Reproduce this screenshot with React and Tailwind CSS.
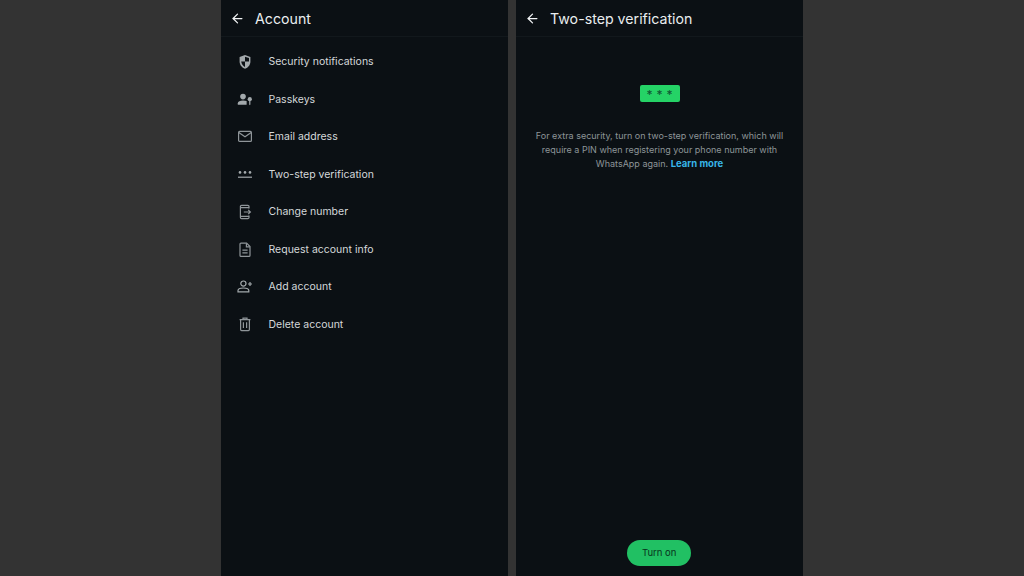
import React from 'react';
import { ArrowLeft } from 'lucide-react';

const Shield = () => (
  <svg width="16" height="16" viewBox="0 0 16 16" fill="none">
    <path d="M8 1 13.4 3V7.4C13.4 10.6 11.2 13.6 8 14.8 4.8 13.6 2.6 10.6 2.6 7.4V3Z" fill="#a3a9ac" />
    <path d="M8 2.7 12 4.1V7.6H8ZM8 7.6V13.1C6 12.1 4.5 10 4.2 7.6H8Z" fill="#0b1014" />
  </svg>
);

const Passkey = () => (
  <svg width="16" height="16" viewBox="0 0 16 16" fill="#a3a9ac">
    <circle cx="6" cy="4.6" r="2.8" />
    <path d="M.8 12.8V11.2C.8 9.4 3.2 8.4 6 8.4 7.4 8.4 8.7 8.6 9.6 9.1V12.8Z" />
    <circle cx="12.8" cy="7.2" r="2.1" />
    <path d="M12.2 8.6h1.2v3.8l-.6.9-.6-.9Z" />
  </svg>
);

const Mail = () => (
  <svg width="16" height="16" viewBox="0 0 16 16" fill="none" stroke="#8f9599" strokeWidth="1.2">
    <rect x="1.6" y="2.4" width="12.8" height="10" rx="1" />
    <path d="M1.8 3.4 8 7.8 14.2 3.4" />
  </svg>
);

const Pin = () => (
  <svg width="16" height="16" viewBox="0 0 16 16" fill="#a3a9ac">
    <circle cx="3" cy="5.4" r="1.3" />
    <circle cx="8" cy="5.4" r="1.3" />
    <circle cx="13" cy="5.4" r="1.3" />
    <rect x="1" y="9.6" width="14" height="1.2" />
  </svg>
);

const ChangeNumber = () => (
  <svg width="16" height="16" viewBox="0 0 16 16" fill="none" stroke="#8f9599" strokeWidth="1.2">
    <path d="M12 4.5V2.6C12 1.9 11.5 1.4 10.8 1.4H4.6C3.9 1.4 3.4 1.9 3.4 2.6V13.4C3.4 14.1 3.9 14.6 4.6 14.6H10.8C11.5 14.6 12 14.1 12 13.4V11.5" />
    <path d="M3.4 3.6H12M3.4 12.4H12" />
    <path d="M6.8 8H13.4M11.2 5.9 13.4 8 11.2 10.1" />
  </svg>
);

const Doc = () => (
  <svg width="16" height="16" viewBox="0 0 16 16" fill="none" stroke="#8f9599" strokeWidth="1.2">
    <path d="M3 2.2C3 1.6 3.4 1.2 4 1.2H9.6L13 4.6V13.4C13 14 12.6 14.4 12 14.4H4C3.4 14.4 3 14 3 13.4Z" />
    <path d="M9.4 1.4V4.8H12.8M5.4 8.2H10.6M5.4 10.8H10.6" />
  </svg>
);

const AddUser = () => (
  <svg width="16" height="16" viewBox="0 0 16 16" fill="none" stroke="#a3a9ac" strokeWidth="1.2">
    <circle cx="6.4" cy="4.6" r="2.6" />
    <path d="M1 12.8V11.6C1 10 3.4 9 6.4 9S11.8 10 11.8 11.6V12.8Z" />
    <path d="M13 3V7M11 5H15" />
  </svg>
);

const Trash = () => (
  <svg width="16" height="16" viewBox="0 0 16 16" fill="none" stroke="#8f9599" strokeWidth="1.2">
    <path d="M2.6 2.6H13.4M6 2.4V1.2H10V2.4" />
    <path d="M3.6 2.6V12.6C3.6 13.2 4 13.6 4.6 13.6H11.4C12 13.6 12.4 13.2 12.4 12.6V2.6" />
    <path d="M6.4 5.2V11M9.6 5.2V11" />
  </svg>
);

const items = [
  { label: 'Security notifications', icon: <Shield /> },
  { label: 'Passkeys', icon: <Passkey /> },
  { label: 'Email address', icon: <Mail /> },
  { label: 'Two-step verification', icon: <Pin /> },
  { label: 'Change number', icon: <ChangeNumber /> },
  { label: 'Request account info', icon: <Doc /> },
  { label: 'Add account', icon: <AddUser /> },
  { label: 'Delete account', icon: <Trash /> },
];

const Header = ({ title }) => (
  <div className="flex items-center h-[37px] pl-[9px] pt-[1px] border-b border-[#12181c]">
    <ArrowLeft size={15} strokeWidth={2} className="text-[#f2f4f5]" />
    <h1 className="ml-[10px] text-[14.2px] text-[#e9edef]">{title}</h1>
  </div>
);

const App = () => {
  return (
    <div className="flex justify-center gap-2 h-[576px] bg-[#333333] overflow-hidden font-['Inter',sans-serif]">
      {/* Account */}
      <div className="w-[287px] bg-[#0b1014]">
        <Header title="Account" />
        <div className="pt-[6.5px]">
          {items.map((item) => (
            <div key={item.label} className="flex items-center h-[37.5px] pl-[15.5px]">
              <span className="w-[32px] shrink-0">{item.icon}</span>
              <span className="text-[10.5px] text-[#d5d9db]">{item.label}</span>
            </div>
          ))}
        </div>
      </div>

      {/* Two-step verification */}
      <div className="flex flex-col items-stretch w-[287px] bg-[#0b1014]">
        <Header title="Two-step verification" />
        <div className="flex flex-col items-center flex-1">
          <div className="flex items-center justify-center gap-[4px] mt-[48px] w-10 h-[17px] rounded-[2px] bg-[#25d366] text-[#0f5132] text-[12px] leading-none">
            <span className="pt-[3px]">*</span>
            <span className="pt-[3px]">*</span>
            <span className="pt-[3px]">*</span>
          </div>
          <p className="mt-[27px] w-[260px] text-center text-[9px] leading-[14px] text-[#8d9598]">
            For extra security, turn on two-step verification, which will require a PIN when registering your phone number with WhatsApp again.{' '}
            <span className="font-bold text-[9.5px] text-[#38b6e8]">Learn more</span>
          </p>
          <button className="mt-auto mb-[10px] -ml-[0.5px] w-16 h-[26px] rounded-full bg-[#21c063] text-[9.5px] text-[#08331c]">
            Turn on
          </button>
        </div>
      </div>
    </div>
  );
};

export default App;
